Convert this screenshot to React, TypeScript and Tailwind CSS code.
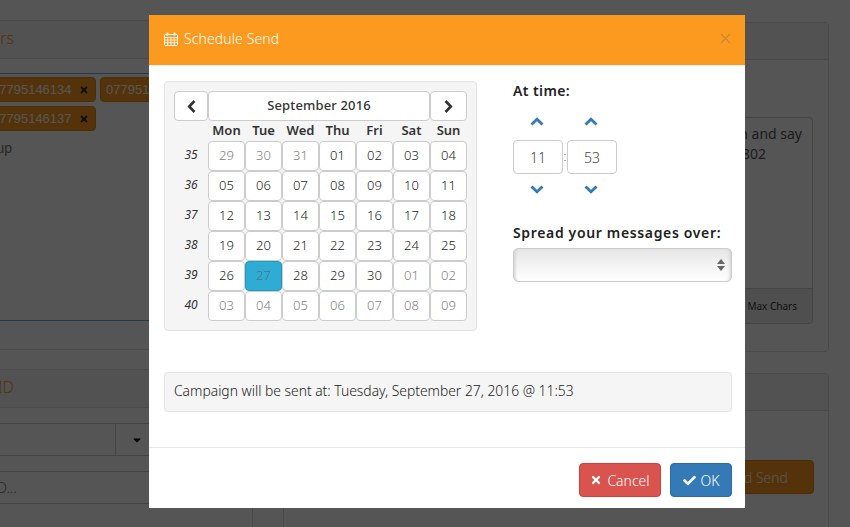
import { FaTimes, FaCheck, FaCaretDown } from "react-icons/fa";

const font = "font-['Noto_Sans',sans-serif]";

const weeks: { no: string; days: string[] }[] = [
    { no: '35', days: ['29', '30', '31', '01', '02', '03', '04'] },
    { no: '36', days: ['05', '06', '07', '08', '09', '10', '11'] },
    { no: '37', days: ['12', '13', '14', '15', '16', '17', '18'] },
    { no: '38', days: ['19', '20', '21', '22', '23', '24', '25'] },
    { no: '39', days: ['26', '27', '28', '29', '30', '01', '02'] },
    { no: '40', days: ['03', '04', '05', '06', '07', '08', '09'] },
]

const dayNames = ['Mon', 'Tue', 'Wed', 'Thu', 'Fri', 'Sat', 'Sun']

function CalendarIcon() {
    return (
        <svg width="14" height="14" viewBox="0 0 14 14" fill="none" stroke="white" strokeWidth="1" className="mr-[6px]">
            <rect x="0.5" y="2.5" width="13" height="11" rx="1" />
            <path d="M0.5 5.5H13.5M0.5 8H13.5M0.5 10.7H13.5M3.7 5.5V13.5M7 5.5V13.5M10.3 5.5V13.5" strokeWidth="0.8" />
            <path d="M3.5 0.5V3.5M10.5 0.5V3.5" strokeWidth="1.6" />
        </svg>
    )
}

// glyphicon style chevron, heavy strokes
function Chevron({ dir }: { dir: 'up' | 'down' | 'left' | 'right' }) {
    if (dir === 'up') {
        return <svg width="14" height="9" viewBox="0 0 14 9" fill="none" stroke="currentColor" strokeWidth="2.8"><path d="M1.5 7.5L7 2.2L12.5 7.5" /></svg>
    }
    if (dir === 'down') {
        return <svg width="14" height="9" viewBox="0 0 14 9" fill="none" stroke="currentColor" strokeWidth="2.8"><path d="M1.5 1.5L7 6.8L12.5 1.5" /></svg>
    }
    if (dir === 'left') {
        return <svg width="9" height="13" viewBox="0 0 9 13" fill="none" stroke="currentColor" strokeWidth="2.6"><path d="M7.5 1L2.2 6.5L7.5 12" /></svg>
    }
    return <svg width="9" height="13" viewBox="0 0 9 13" fill="none" stroke="currentColor" strokeWidth="2.6"><path d="M1.5 1L6.8 6.5L1.5 12" /></svg>
}

function Calendar() {
    return (
        <div className="w-[313px] h-[250px] bg-[#f5f5f5] border border-[#e3e3e3] rounded-[4px] pl-[9px] pt-[9px]">
            <div className="flex h-[30px] text-[#333]">
                <div className="w-[34px] bg-white border border-[#ccc] rounded-[4px] flex items-center justify-center"><Chevron dir="left" /></div>
                <div className="w-[222px] bg-white border border-[#ccc] rounded-[4px] flex items-center justify-center text-[13px] font-medium tracking-[0.15px]">September 2016</div>
                <div className="w-[37px] bg-white border border-[#ccc] rounded-[4px] flex items-center justify-center"><Chevron dir="right" /></div>
            </div>
            <div className="grid grid-cols-[34px_repeat(7,37px)] grid-rows-[20px_repeat(6,30px)] w-[293px]">
                <div />
                {dayNames.map((d) => (
                    <div key={d} className="flex items-center justify-center text-[13px] font-semibold text-[#333]">{d}</div>
                ))}
                {weeks.map((w, i) => (
                    <Week key={w.no} no={w.no} days={w.days} row={i} />
                ))}
            </div>
        </div>
    )
}

function Week({ no, days, row }: { no: string; days: string[]; row: number }) {
    return (
        <>
            <div className="flex items-center justify-center text-[12px] italic text-[#333] pb-[2px]">{no}</div>
            {days.map((d, i) => {
                const outside = (row === 0 && i < 3) || (row === 4 && i > 4) || row === 5
                const selected = row === 4 && i === 1
                return (
                    <div
                        key={d + i}
                        className={selected
                            ? "flex items-center justify-center text-[13px] font-light rounded-[4px] border border-[#269abc] bg-[#2eacd3] text-[#4f7486]"
                            : outside
                                ? "flex items-center justify-center text-[13px] font-light rounded-[4px] border border-[#ccc] bg-white text-[#808080]"
                                : "flex items-center justify-center text-[13px] font-light rounded-[4px] border border-[#ccc] bg-white text-[#222]"}
                    >
                        {d}
                    </div>
                )
            })}
        </>
    )
}

function TimePicker() {
    return (
        <div className="w-[104px]">
            <div className="flex h-[24px] items-center text-[#337ab7]">
                <div className="w-[48px] flex justify-center"><Chevron dir="up" /></div>
                <div className="w-[6px]" />
                <div className="w-[48px] flex justify-center"><Chevron dir="up" /></div>
            </div>
            <div className="flex mt-[7px] h-[34px] text-[14px] font-light text-[#444]">
                <div className="w-[50px] border border-[#ccc] rounded-[4px] flex items-center justify-center">11</div>
                <div className="w-[4px] flex items-center justify-center text-[12px]">:</div>
                <div className="w-[50px] border border-[#ccc] rounded-[4px] flex items-center justify-center">53</div>
            </div>
            <div className="flex h-[24px] mt-[3px] items-center text-[#337ab7]">
                <div className="w-[48px] flex justify-center"><Chevron dir="down" /></div>
                <div className="w-[6px]" />
                <div className="w-[48px] flex justify-center"><Chevron dir="down" /></div>
            </div>
        </div>
    )
}

function Modal() {
    return (
        <div className={"w-[596px] h-[493px] bg-white flex flex-col " + font}>
            <div className="h-[51px] bg-[#fc9a1f] flex items-center justify-between pl-[15px] pr-[14px] pb-[3px] text-white border-b border-[#f0f0f0]">
                <div className="flex items-center text-[14px] font-light tracking-[0.1px]">
                    <CalendarIcon />
                    Schedule Send
                </div>
                <svg width="11" height="11" viewBox="0 0 11 11" stroke="#c98a38" strokeWidth="1.3"><path d="M1 1L10 10M10 1L1 10" /></svg>
            </div>
            <div className="flex pl-[15px] pt-[15px] h-[306px]">
                <Calendar />
                <div className="ml-[36px] w-[219px]">
                    <div className="text-[14px] font-semibold text-[#222] tracking-[0.4px] leading-[20px]">At time:</div>
                    <div className="mt-[8px]"><TimePicker /></div>
                    <div className="text-[14px] font-semibold text-[#222] tracking-[0.65px] mt-[22px] leading-[20px]">Spread your messages over:</div>
                    <div className="mt-[5px] h-[34px] rounded-[5px] border border-[#ccc] bg-gradient-to-b from-[#e6e6e6] to-white flex items-center justify-end pr-[6px] shadow-[inset_3px_0_3px_-2px_#ccc,inset_-3px_0_3px_-2px_#ccc]">
                        <svg width="8" height="12" viewBox="0 0 8 12" fill="#666"><path d="M4 0L8 5H0ZM4 12L0 7H8Z" /></svg>
                    </div>
                </div>
            </div>
            <div className="ml-[15px] mr-[13px] h-[40px] bg-[#f5f5f5] border border-[#e3e3e3] rounded-[4px] flex items-center pl-[9px] pb-[2px] text-[13.85px] font-light text-[#222]">
                Campaign will be sent at: Tuesday, September 27, 2016 @ 11:53
            </div>
            <div className="mt-[35px] border-t border-[#e5e5e5] flex justify-end gap-[9px] pt-[15px] pr-[13px]">
                <div className="w-[82px] h-[34px] rounded-[4px] bg-[#d9534f] border border-[#d43f3a] text-white text-[14px] font-light flex items-center justify-center gap-[5px]"><FaTimes size={12} /> Cancel</div>
                <div className="w-[62px] h-[34px] rounded-[4px] bg-[#337ab7] border border-[#2e6da4] text-white text-[14px] font-light flex items-center justify-center gap-[5px]"><FaCheck size={13} /> OK</div>
            </div>
        </div>
    )
}

function Chip({ text }: { text: string }) {
    return (
        <div className="w-[110px] h-[25px] shrink-0 rounded-[4px] bg-[#fc9a1f] border border-[#e08a10] flex items-center justify-between pl-[5px] pr-[6px] text-white text-[13px] font-['Liberation_Sans',sans-serif]">
            {text}
            <FaTimes size={10} className="text-[#222]" />
        </div>
    )
}

function Background() {
    return (
        <div className={"flex w-[979px] -ml-[150px] pt-[20px] gap-[30px] " + font}>
            <div className="w-[403px]">
                <div className="h-[330px] border border-[#ddd] rounded-[4px]">
                    <div className="h-[38px] bg-[#f5f5f5] border-b border-[#ddd] flex items-center pb-[3px] text-[16px] font-light text-[#fc9a1f]">
                        <div className="w-[163px] text-right">Numbers</div>
                    </div>
                    <div className="ml-[15px] mt-[14px] h-[248px] border-y border-[#66afe9] pl-[120px] pt-[3px]">
                        <div className="flex gap-[4px]">
                            <Chip text="07795146134" />
                            <Chip text="07795146135" />
                        </div>
                        <div className="mt-[4px]"><Chip text="07795146137" /></div>
                        <div className="mt-[7px] w-[26px] text-[14px] text-[#777] font-['Liberation_Sans',sans-serif] text-right">up</div>
                    </div>
                </div>
                <div className="mt-[19px] h-[200px] border border-[#ddd] rounded-[4px]">
                    <div className="h-[38px] bg-[#f5f5f5] border-b border-[#ddd] flex items-center pb-[3px] text-[16px] font-light text-[#fc9a1f]">
                        <div className="w-[163px] text-right">ID</div>
                    </div>
                    <div className="ml-[15px] mr-[90px] mt-[15px] h-[33px] border-y border-r border-[#ccc] flex justify-end bg-white">
                        <div className="w-[46px] border-l border-[#ccc] flex items-center pl-[15px]"><FaCaretDown size={12} className="text-black" /></div>
                    </div>
                    <div className="ml-[15px] mt-[15px] h-[33px] border-y border-[#ccc] flex items-center text-[14px] font-light text-[#777]">
                        <div className="w-[165px] pl-[131px]">D...</div>
                    </div>
                </div>
            </div>
            <div className="w-[546px]">
                <div className="h-[330px] mt-[2px] border border-[#ddd] rounded-[4px]">
                    <div className="h-[37px] bg-[#f5f5f5] border-b border-[#ddd]" />
                    <div className="mx-[15px] mt-[57px] h-[207px] border border-[#ccc] rounded-[4px] overflow-hidden">
                        <div className="h-[170px] pt-[6px] text-right pr-[10px] text-[14px] leading-[20px] text-[#555]">
                            <div>n and say</div>
                            <div className="pr-[36px]">802</div>
                        </div>
                        <div className="h-[36px] bg-[#eee] border-t border-[#ccc] flex items-center justify-end pr-[15px] text-[10px] text-[#333]">5 Max Chars</div>
                    </div>
                </div>
                <div className="mt-[21px] h-[200px] border border-[#ddd] rounded-[4px]">
                    <div className="h-[37px] bg-[#f5f5f5] border-b border-[#ddd]" />
                    <div className="flex justify-end mt-[49px] pr-[14px]">
                        <div className="w-[120px] h-[34px] rounded-[4px] bg-[#fc9a1f] border border-[#e08a10] text-white text-[14px] font-light flex items-center justify-end pr-[25px]">d Send</div>
                    </div>
                </div>
            </div>
        </div>
    )
}

function App() {
    return (
        <div className="relative w-[850px] h-[527px] overflow-hidden bg-white">
            <Background />
            <div className="absolute inset-0 bg-black/[.667] pl-[149px] pt-[15px]">
                <Modal />
            </div>
        </div>
    )
}

export default App;
